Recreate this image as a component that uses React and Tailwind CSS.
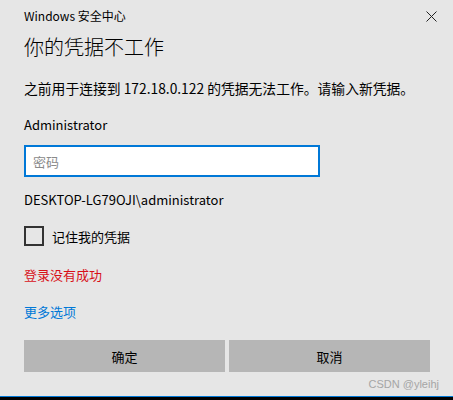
export default function App() {
  const font = { fontFamily: '"Noto Sans CJK SC", "Noto Sans", sans-serif' };
  return (
    <div
      className="w-[453px] h-[400px] bg-[#e6e6e6] flex flex-col text-black overflow-hidden"
      style={font}
    >
      <div className="h-[32px] flex items-center justify-between pl-6 pr-[16px]">
        <span className="text-[12px] leading-none">Windows 安全中心</span>
        <svg width="11" height="11" viewBox="0 0 11 11" className="text-[#222]">
          <path d="M0.5 0.5 L10.5 10.5 M10.5 0.5 L0.5 10.5" stroke="currentColor" strokeWidth="1" />
        </svg>
      </div>
      <div className="h-[30px] flex items-center pl-6">
        <span className="text-[20px] leading-none font-light">你的凭据不工作</span>
      </div>
      <div className="mt-4 h-[22px] flex items-center pl-6">
        <span className="text-[13.8px] leading-none whitespace-nowrap">
          之前用于连接到 172.18.0.122 的凭据无法工作。请输入新凭据。
        </span>
      </div>
      <div className="mt-[13px] h-[22px] flex items-center pl-6">
        <span className="text-[13px] leading-none">Administrator</span>
      </div>
      <div className="mt-[10px] pl-6">
        <div className="w-[296px] h-[32px] bg-white border-2 border-[#0078d7] flex items-center pl-[7px]">
          <span className="text-[13px] leading-none text-[#8a8a8a]">密码</span>
        </div>
      </div>
      <div className="mt-[11px] h-[22px] flex items-center pl-6">
        <span className="text-[13px] leading-none">DESKTOP-LG79OJI\administrator</span>
      </div>
      <div className="mt-4 h-[20px] flex items-center pl-6 gap-2">
        <div className="w-[20px] h-[20px] border-2 border-[#333333]" />
        <span className="text-[13px] leading-none">记住我的凭据</span>
      </div>
      <div className="mt-[17px] h-[22px] flex items-center pl-6">
        <span className="text-[13px] leading-none text-[#d81018]">登录没有成功</span>
      </div>
      <div className="mt-[15px] h-[22px] flex items-center pl-6">
        <span className="text-[13px] leading-none text-[#0078d7]">更多选项</span>
      </div>
      <div className="mt-[18px] pl-6 pr-[23px] flex gap-1">
        <div className="flex-1 h-[32px] bg-[#b6b6b6] flex items-center justify-center">
          <span className="text-[13px] leading-none">确定</span>
        </div>
        <div className="flex-1 h-[32px] bg-[#b6b6b6] flex items-center justify-center">
          <span className="text-[13px] leading-none">取消</span>
        </div>
      </div>
      <div className="mt-[2px] h-[20px] flex items-center justify-end pr-[14px]">
        <span
          className="text-[11px] leading-none text-[#a5a5a5]"
          style={{ fontFamily: '"Liberation Sans", sans-serif' }}
        >
          CSDN @yleihj
        </span>
      </div>
      <div className="flex-1" />
      <div className="h-[1px] bg-[#0078d7]" />
      <div className="h-[3px] bg-black" />
    </div>
  );
}
